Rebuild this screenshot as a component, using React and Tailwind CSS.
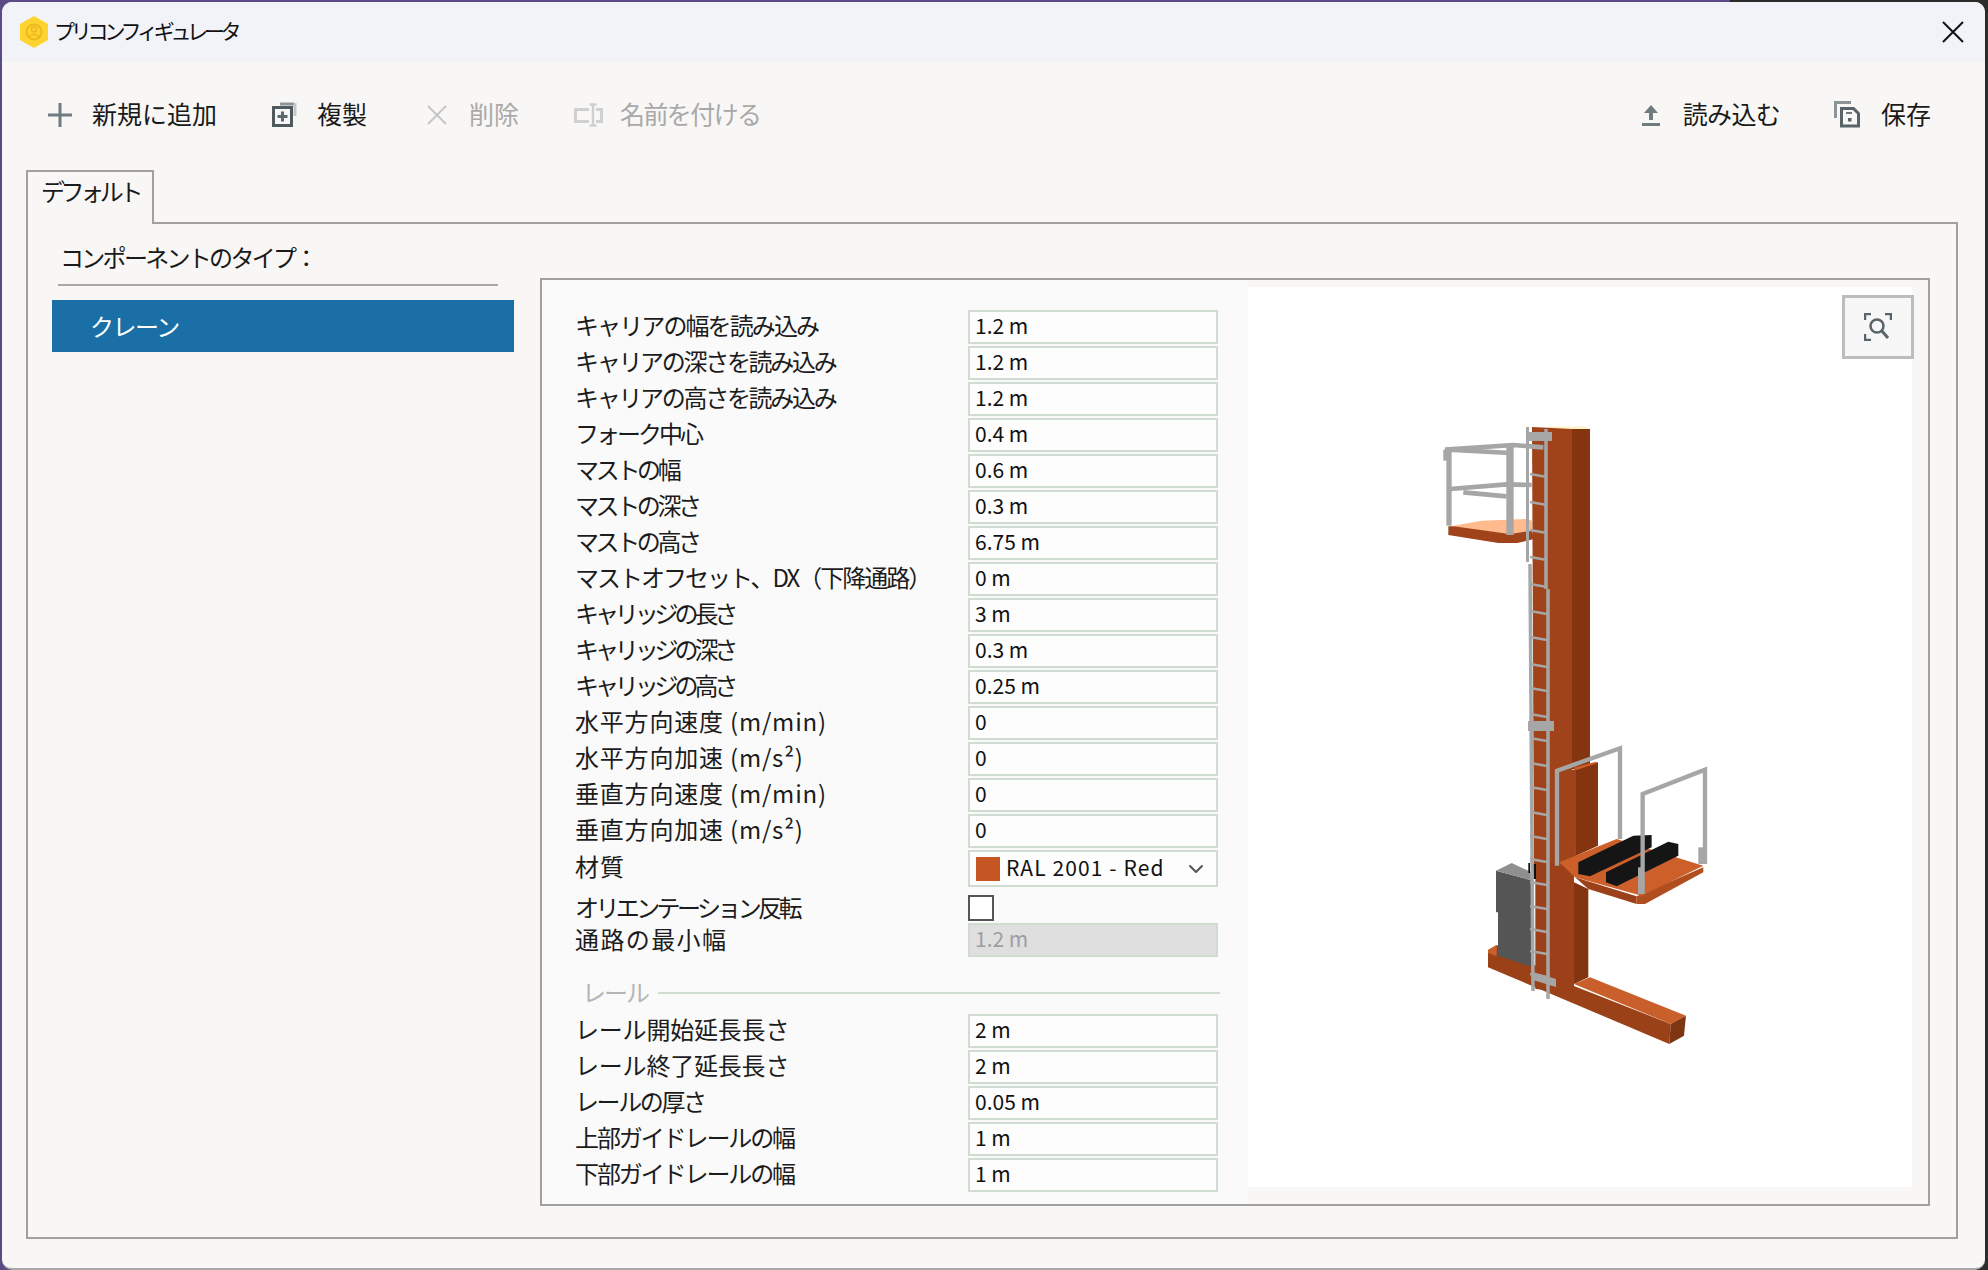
import React from "react";
import { ChevronDown } from "lucide-react";

const font = "font-['Noto_Sans_CJK_JP','Noto_Sans',sans-serif]";

const topRows = [
  { label: "キャリアの幅を読み込み", value: "1.2 m", cls: "tracking-[-1.9px]" },
  { label: "キャリアの深さを読み込み", value: "1.2 m", cls: "tracking-[-2.3px]" },
  { label: "キャリアの高さを読み込み", value: "1.2 m", cls: "tracking-[-2.3px]" },
  { label: "フォーク中心", value: "0.4 m", cls: "tracking-[-3px]" },
  { label: "マストの幅", value: "0.6 m", cls: "tracking-[-3.3px]" },
  { label: "マストの深さ", value: "0.3 m", cls: "tracking-[-3.4px]" },
  { label: "マストの高さ", value: "6.75 m", cls: "tracking-[-3.4px]" },
  { label: "マストオフセット、DX（下降通路）", value: "0 m", cls: "tracking-[-2px]" },
  { label: "キャリッジの長さ", value: "3 m", cls: "tracking-[-4.1px]" },
  { label: "キャリッジの深さ", value: "0.3 m", cls: "tracking-[-4.1px]" },
  { label: "キャリッジの高さ", value: "0.25 m", cls: "tracking-[-4.1px]" },
  { label: "水平方向速度 (m/min)", value: "0", cls: "tracking-[0.8px]" },
  { label: "水平方向加速 (m/s²)", value: "0", cls: "tracking-[0.8px]" },
  { label: "垂直方向速度 (m/min)", value: "0", cls: "tracking-[0.8px]" },
  { label: "垂直方向加速 (m/s²)", value: "0", cls: "tracking-[0.8px]" },
];

const railRows = [
  { label: "レール開始延長長さ", value: "2 m", cls: "tracking-[-0.2px]" },
  { label: "レール終了延長長さ", value: "2 m", cls: "tracking-[-0.2px]" },
  { label: "レールの厚さ", value: "0.05 m", cls: "tracking-[-2.4px]" },
  { label: "上部ガイドレールの幅", value: "1 m", cls: "tracking-[-2.1px]" },
  { label: "下部ガイドレールの幅", value: "1 m", cls: "tracking-[-2.1px]" },
];

const rungs = [475, 503, 531, 558, 585, 612, 638, 665, 689, 715, 739, 764, 788, 813, 837, 860, 883, 907, 930, 952, 975];

const Row = ({ label, value, cls }) => (
  <div className="flex items-center h-[34px] mb-[2px]">
    <span className={`w-[393px] pb-[4px] text-[24px] leading-none whitespace-nowrap text-[#1c1c1c] ${cls}`}>{label}</span>
    <div className="w-[250px] h-[34px] border-2 border-[#cfdccf] bg-[#fdfdfd] pl-[5px] pb-[4px] flex items-center text-[21px] leading-none text-[#111]">
      {value}
    </div>
  </div>
);

const ToolButton = ({ icon, label, disabled, gap, cls }) => (
  <button className={`flex items-center ${gap} text-[25px] leading-none ${disabled ? "text-[#a9a9a9]" : "text-[#1a1a1a]"} ${cls}`}>
    {icon}
    <span className="mb-[3px]">{label}</span>
  </button>
);

const Logo = () => (
  <svg width="28" height="32" viewBox="0 0 28 32">
    <path d="M14 0 L28 8 V24 L14 32 L0 24 V8 Z" fill="#fdd42f" />
    <circle cx="14" cy="16" r="7.5" fill="none" stroke="#eeb71f" strokeWidth="2" />
    <circle cx="14" cy="13.5" r="2.5" fill="none" stroke="#eeb71f" strokeWidth="1.5" />
    <path d="M9 21 Q14 16 19 21" fill="none" stroke="#eeb71f" strokeWidth="1.5" />
  </svg>
);

// upper platform, drawn in the coordinates of the crop at 1400,410
const UpperPlatform = () => (
  <g transform="translate(1400 410) scale(0.3333)">
    <polygon points="160,350 245,335 380,330 396,335 396,365 330,375 160,355" fill="#ffbb8e" />
    <polygon points="145,352 160,352 330,375 396,365 402,390 352,402 295,402 145,378" fill="#a0431a" />
    <g fill="none" stroke="#a6a6a6" strokeWidth="14">
      <path d="M147,125 V350" strokeWidth="16" />
      <path d="M330,105 V378" strokeWidth="22" />
      <path d="M135,122 L340,108 L430,115" />
      <path d="M145,122 L330,132" />
      <path d="M150,240 L320,226 L395,228" />
      <path d="M190,250 L320,262" />
      <path d="M137,122 V155" />
    </g>
  </g>
);

// lower half of the crane, drawn in the coordinates of the crop at 1460,700
const LowerCrane = () => (
  <g transform="translate(1460 700) scale(0.3333)">
    <polygon points="84,755 110,738 340,860 632,975 628,1035 84,805" fill="#9a4118" />
    <polygon points="84,752 110,738 110,772 84,762" fill="#c95f2b" />
    <polygon points="342,855 390,835 678,950 632,975" fill="#c95f2b" />
    <polygon points="632,975 678,950 672,1010 628,1035" fill="#7e3512" />
    <polygon points="226,490 342,490 342,880 226,870" fill="#9c4019" />
    <polygon points="342,550 385,570 385,835 342,855" fill="#84350f" />
    <polygon points="108,515 218,545 218,805 114,770 114,640 108,640" fill="#555555" />
    <polygon points="108,515 155,492 215,520 218,545" fill="#8f8f8f" />
    <rect x="205" y="492" width="5" height="30" fill="#111" />
    <rect x="218" y="495" width="10" height="45" fill="#111" />
    <polygon points="300,220 348,210 348,500 300,500" fill="#a0431a" />
    <polygon points="348,210 414,190 414,440 348,470" fill="#84350f" />
    <polygon points="340,206 408,188 412,192 350,213" fill="#cc5f2a" />
    <polygon points="345,535 530,592 530,615 385,570" fill="#9c4019" />
    <polygon points="530,592 730,505 730,520 555,615 530,615" fill="#b04e20" />
    <polygon points="298,490 470,420 730,500 545,590 345,535" fill="#cc5f2a" />
    <polygon points="355,490 520,410 575,408 575,445 390,532 355,525" fill="#151515" />
    <polygon points="438,520 625,428 655,435 655,470 470,562 438,550" fill="#151515" />
    <g fill="none" stroke="#a6a6a6" strokeWidth="13">
      <path d="M291,500 V215 L480,148 V420" />
      <path d="M548,585 V285 L735,212 V495" />
      <path d="M542,505 V585" strokeWidth="16" />
      <path d="M722,445 V495" strokeWidth="14" />
    </g>
  </g>
);

const Ladder = () => (
  <g fill="none" stroke="#a6a6a6">
    <path d="M1527.5,428 V563" strokeWidth="3" />
    <path d="M1530,565 L1533,992" strokeWidth="3.5" />
    <path d="M1546,430 V590 M1548,590 V1000" strokeWidth="3.5" />
    {rungs.map((y) => (
      <path key={y} d={`M1530,${y} L1547,${y + 3}`} strokeWidth="2.5" />
    ))}
    <rect x="1528" y="433" width="24" height="9" fill="#a6a6a6" stroke="none" />
    <rect x="1528" y="722" width="26" height="10" fill="#a6a6a6" stroke="none" />
    <polygon points="1533,973 1556,980 1556,988 1533,981" fill="#a6a6a6" stroke="none" />
  </g>
);

const Crane = () => (
  <svg className="absolute inset-0" width="664" height="900" viewBox="1248 288 664 900">
    <polygon points="1542,430 1550,427.5 1584,427.5 1590,430" fill="#fff3c9" />
    <polygon points="1532,428 1572,430 1572,880 1534,880" fill="#a0431a" />
    <polygon points="1572,430 1590,430 1590,770 1572,770" fill="#84350f" />
    <LowerCrane />
    <UpperPlatform />
    <Ladder />
  </svg>
);

const App = () => {
  return (
    <div className={`w-[1988px] h-[1270px] overflow-hidden pt-[2px] pl-[2px] bg-[linear-gradient(90deg,#5b4a85_87%,#2b2b2b_87%)] ${font}`}>
      <div className="w-[1983px] h-[1268px] rounded-[10px] overflow-hidden bg-[#f8f7f5] flex flex-col border-b-2 border-[#a8a8a8]">
        {/* Title bar */}
        <div className="h-[60px] shrink-0 bg-[#f1f3f8] flex items-center justify-between pl-[18px] pr-[21px]">
          <div className="flex items-center gap-[6px]">
            <Logo />
            <span className="mb-[4px] text-[21px] leading-none tracking-[-4.2px] text-[#111]">プリコンフィギュレータ</span>
          </div>
          <svg width="22" height="22" viewBox="0 0 22 22" stroke="#111" strokeWidth="2">
            <path d="M1 1 L21 21 M21 1 L1 21" />
          </svg>
        </div>

        {/* Toolbar */}
        <div className="h-[108px] shrink-0 flex items-center justify-between pl-[46px] pr-[54px] pb-[3px]">
          <div className="flex items-center">
            <ToolButton
              gap="gap-[20px]"
              label="新規に追加"
              icon={
                <svg width="24" height="24" viewBox="0 0 24 24" stroke="#6f7b80" strokeWidth="3">
                  <path d="M12 0 V24 M0 12 H24" />
                </svg>
              }
            />
            <ToolButton
              gap="gap-[20px]"
              cls="ml-[55px]"
              label="複製"
              icon={
                <svg width="25" height="25" viewBox="0 0 25 25" fill="none">
                  <rect x="1.5" y="5.5" width="18" height="18" stroke="#4f5a5e" strokeWidth="3" />
                  <path d="M8 2 H22" stroke="#8b9498" strokeWidth="3" />
                  <path d="M23 1 V14" stroke="#c4c8ca" strokeWidth="3" />
                  <path d="M5.5 14.5 H15.5 M10.5 9.5 V19.5" stroke="#5d686c" strokeWidth="3" />
                </svg>
              }
            />
            <ToolButton
              disabled
              gap="gap-[22px]"
              cls="ml-[60px]"
              label="削除"
              icon={
                <svg width="20" height="20" viewBox="0 0 20 20" stroke="#c6c6c6" strokeWidth="2">
                  <path d="M1 1 L19 19 M19 1 L1 19" />
                </svg>
              }
            />
            <ToolButton
              disabled
              gap="gap-[17px]"
              cls="ml-[55px] tracking-[-1.6px]"
              label="名前を付ける"
              icon={
                <svg width="29" height="24" viewBox="0 0 29 24" fill="none" stroke="#d0d0d0" strokeWidth="3">
                  <path d="M15 6.5 H1.5 V18.5 H15" />
                  <path d="M22 6.5 H27.5 V18.5 H22" />
                  <path d="M15.5 1.5 H22.5 M19 1.5 V22.5 M15.5 22.5 H22.5" strokeWidth="2.5" />
                </svg>
              }
            />
          </div>
          <div className="flex items-center">
            <ToolButton
              gap="gap-[23px]"
              cls="tracking-[-0.7px]"
              label="読み込む"
              icon={
                <svg width="18" height="24" viewBox="0 0 18 24" fill="#707b80">
                  <path d="M9 2 L16 10 H11 V17 H7 V10 H2 Z" />
                  <rect x="0" y="20" width="18" height="3" />
                </svg>
              }
            />
            <ToolButton
              gap="gap-[21px]"
              cls="ml-[54px]"
              label="保存"
              icon={
                <svg width="26" height="27" viewBox="0 0 26 27" fill="none">
                  <path d="M1.5 17 V1.5 H17" stroke="#8b9498" strokeWidth="3" />
                  <path d="M7.5 7.5 H19.5 L24.5 12.5 V25 H7.5 Z" stroke="#596368" strokeWidth="3" />
                  <path d="M12 12 H18" stroke="#6f797d" strokeWidth="2" />
                  <rect x="14" y="17" width="3.5" height="3.5" fill="#596368" />
                </svg>
              }
            />
          </div>
        </div>

        {/* Tab strip */}
        <div className="ml-[24px] w-[128px] h-[54px] -mb-[2px] relative z-10 bg-[#f8f7f5] border-2 border-b-0 border-[#a0a0a0] pl-[13px] pt-[3px] text-[24px] leading-[32px] tracking-[-4.4px] whitespace-nowrap text-[#1a1a1a]">
          デフォルト
        </div>

        {/* Tab body */}
        <div className="ml-[24px] w-[1932px] h-[1017px] shrink-0 border-2 border-[#a0a0a0] flex">
          {/* Component type list */}
          <div className="w-[512px] shrink-0 pl-[24px] pt-[21px]">
            <div className="w-[440px] ml-[6px] h-[41px] border-b-2 border-[#a8a8a8] text-[24px] leading-none tracking-[-2.7px] pl-[2px] whitespace-nowrap text-[#1a1a1a]">
              コンポーネントのタイプ：
            </div>
            <div className="mt-[14px] w-[462px] h-[52px] bg-[#196fa6] flex items-center pl-[38px] text-[24px] leading-none tracking-[-1.5px] text-white">
              クレーン
            </div>
          </div>

          {/* Settings panel */}
          <div className="mt-[54px] w-[1390px] h-[928px] shrink-0 border-2 border-[#a0a0a0] flex">
            <div className="w-[706px] shrink-0 bg-[#fafafa] pl-[33px] pt-[30px]">
              {topRows.map((row) => (
                <Row key={row.label} {...row} />
              ))}

              <div className="flex items-center h-[37px]">
                <span className="w-[393px] pb-[6px] text-[24px] leading-none text-[#1c1c1c] tracking-[1px]">材質</span>
                <div className="w-[250px] h-[37px] border-2 border-[#cfdccf] bg-[#fdfdfd] pl-[6px] pr-[8px] flex items-center justify-between text-[21px] leading-none text-[#111]">
                  <span className="flex items-center gap-[6px] whitespace-nowrap tracking-[1.1px]">
                    <span className="w-[24px] h-[24px] bg-[#c65524]" />
                    <span className="mb-[2px]">RAL 2001 - Red</span>
                  </span>
                  <ChevronDown size={24} strokeWidth={2} className="text-[#555]" />
                </div>
              </div>

              <div className="flex items-center h-[26px] mt-[8px]">
                <span className="w-[393px] pb-[3px] text-[24px] leading-none tracking-[-3.6px] text-[#1c1c1c] whitespace-nowrap">オリエンテーション反転</span>
                <div className="w-[26px] h-[26px] border-2 border-[#555] bg-white" />
              </div>

              <div className="flex items-center h-[34px] mt-[2px]">
                <span className="w-[393px] pb-[2px] text-[24px] leading-none tracking-[1.4px] text-[#1c1c1c]">通路の最小幅</span>
                <div className="w-[250px] h-[34px] border-2 border-[#cfdccf] bg-[#dfdfdf] pl-[5px] pb-[4px] flex items-center text-[21px] leading-none text-[#a09ca6]">
                  1.2 m
                </div>
              </div>

              <div className="flex items-center h-[24px] mt-[24px] mb-[9px] pl-[7px]">
                <span className="w-[67px] pb-[2px] text-[24px] leading-none tracking-[-2px] whitespace-nowrap text-[#b5b5b5]">レール</span>
                <div className="ml-[9px] w-[562px] h-[2px] bg-[#cfdccf]" />
              </div>

              {railRows.map((row) => (
                <Row key={row.label} {...row} />
              ))}
            </div>

            {/* 3D preview */}
            <div className="relative mt-[7px] w-[664px] h-[900px] shrink-0 bg-white">
              <Crane />
              <button className="absolute top-[8px] right-[-2px] w-[72px] h-[64px] border-[3px] border-[#bdbdbd] bg-[#f7f7f7] flex items-center justify-center">
                <svg width="28" height="28" viewBox="0 0 28 28" fill="none" stroke="#59656b" strokeWidth="2.5">
                  <path d="M1 7 V1 H7 M21 1 H27 V7 M1 21 V27 H7" />
                  <circle cx="13" cy="13" r="6.5" />
                  <path d="M17.5 17.5 L24 25" strokeWidth="3" />
                </svg>
              </button>
            </div>
          </div>
        </div>
      </div>
    </div>
  );
};

export default App;
